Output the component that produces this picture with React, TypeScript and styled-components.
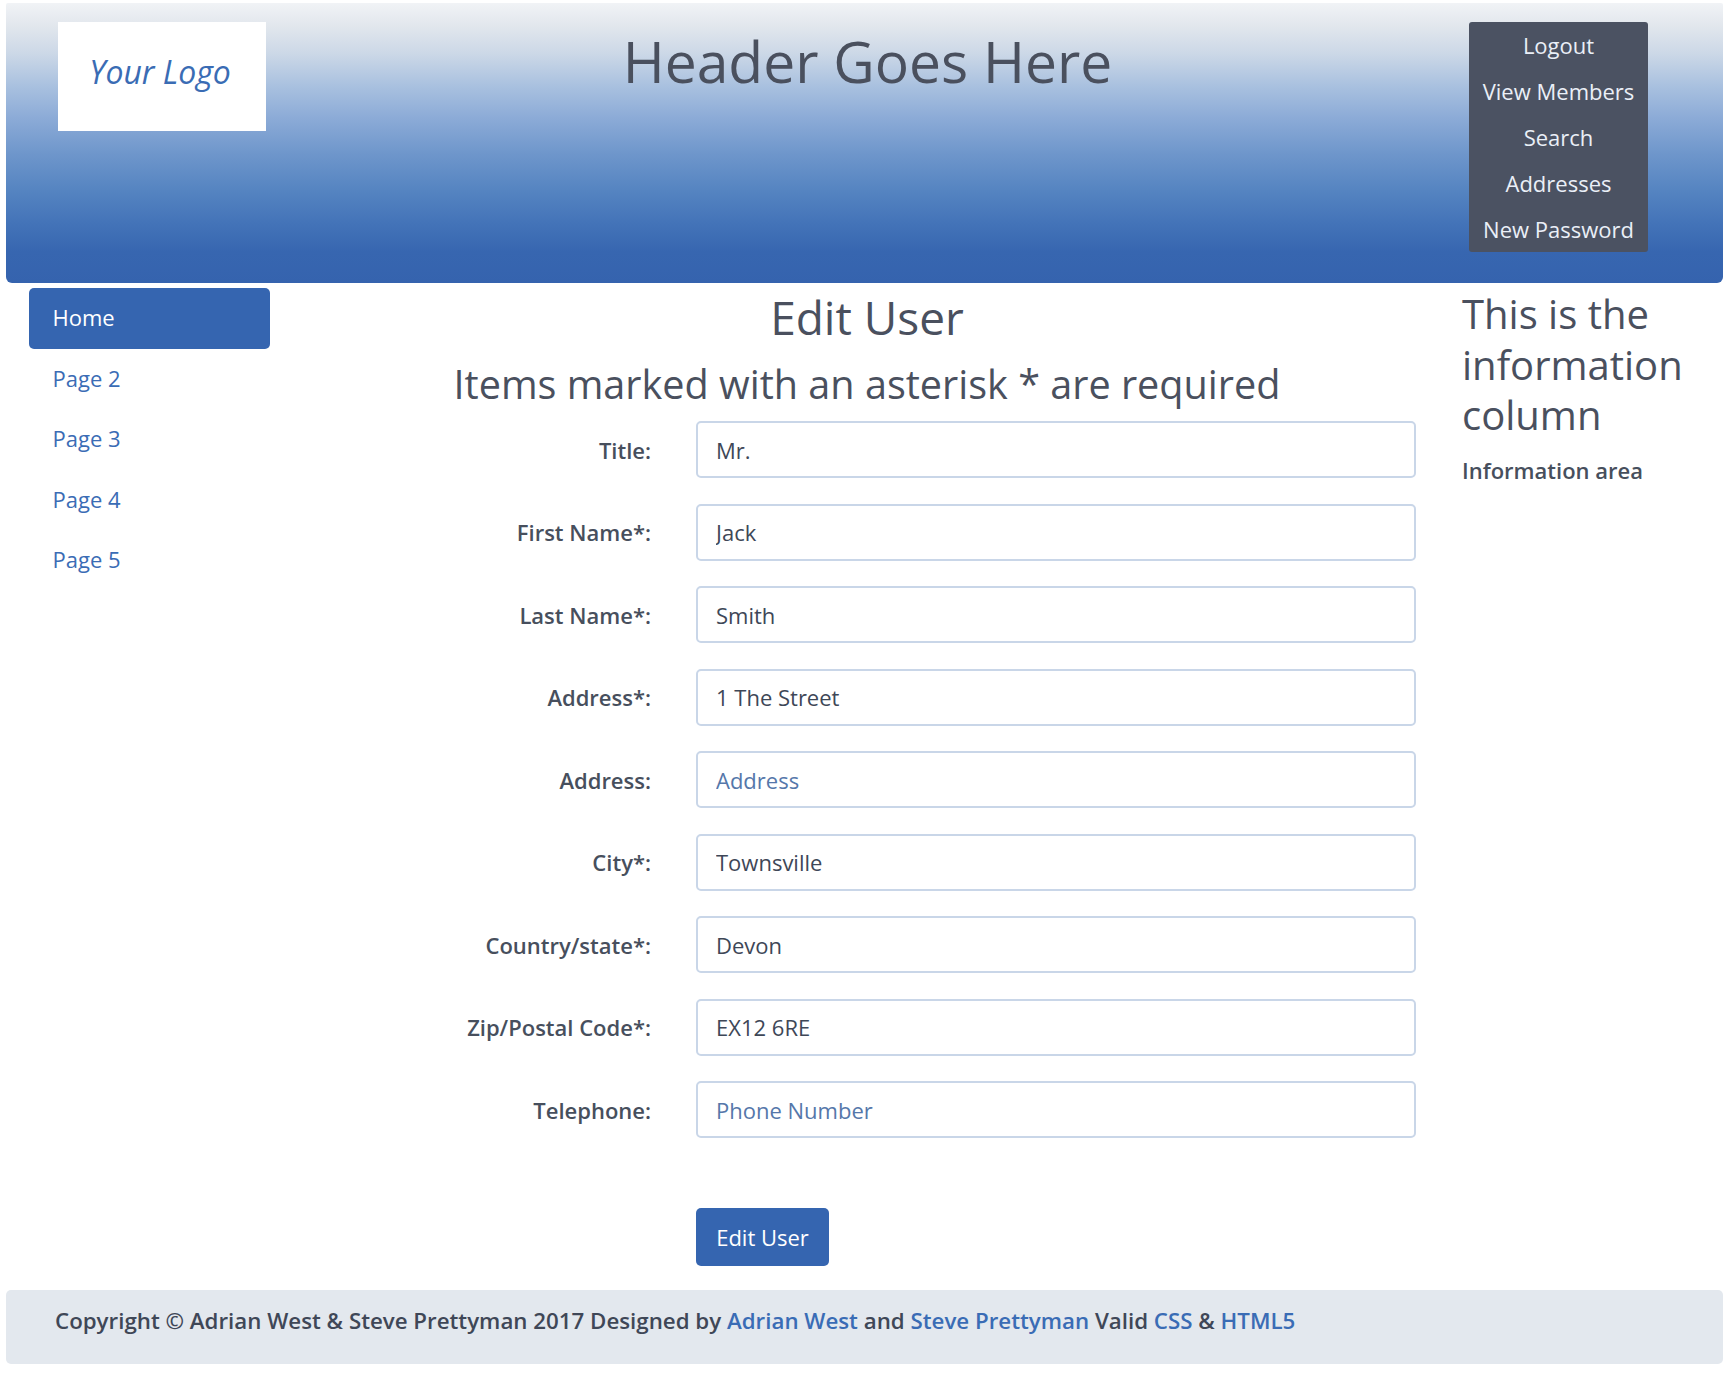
import React from "react";
import styled, { createGlobalStyle } from "styled-components";

const GlobalStyle = createGlobalStyle`
  html, body {
    margin: 0;
    padding: 0;
    background: #ffffff;
  }
  body {
    font-family: "Open Sans", "Noto Sans", "Liberation Sans", sans-serif;
    color: #454d5b;
  }
  *, *::before, *::after {
    box-sizing: border-box;
  }
`;

const Page = styled.div`
  width: 1725px;
  padding: 3px 2px 9px 6px;
  display: flex;
  flex-direction: column;
`;

const Header = styled.header`
  height: 280px;
  display: flex;
  align-items: flex-start;
  padding: 19px 75px 0 52px;
  border-radius: 2px 2px 6px 6px;
  background: linear-gradient(
    to bottom,
    #f1f3f6 0%,
    #e2e7ed 8%,
    #ccd8e7 18%,
    #a8c0df 30%,
    #8cabd7 41%,
    #6e96cb 54%,
    #5584c1 67%,
    #4373b8 79%,
    #3766b0 89%,
    #3563ae 100%
  );
`;

const LogoBox = styled.div`
  width: 208px;
  height: 109px;
  background: #ffffff;
  display: flex;
  align-items: center;
  justify-content: center;
  padding: 0 4px 10px 0;
  font-style: italic;
  font-size: 32px;
  color: #3a6cb4;
`;

const SiteTitle = styled.h1`
  flex: 1;
  margin: 0;
  padding-top: 10px;
  text-align: center;
  font-size: 57px;
  line-height: 58px;
  font-weight: 400;
  color: #4a505e;
`;

const TopNav = styled.nav`
  width: 179px;
  background: #4b5262;
  border-radius: 3px;
  display: flex;
  flex-direction: column;
`;

const TopNavLink = styled.a`
  display: block;
  height: 46px;
  line-height: 46px;
  text-align: center;
  font-size: 22px;
  font-weight: 400;
  color: #eaeff7;
  text-decoration: none;
`;

const Body = styled.div`
  display: grid;
  grid-template-columns: 286px 1150px 1fr;
  padding-top: 5px;
`;

const SideNav = styled.nav`
  display: flex;
  flex-direction: column;
  padding-left: 22.5px;
`;

const SideLink = styled.a<{ $active?: boolean }>`
  display: flex;
  align-items: center;
  width: 241px;
  height: 60.5px;
  padding: 0 0 2px 24px;
  border-radius: 5px;
  font-size: 22px;
  text-decoration: none;
  color: ${(p) => (p.$active ? "#ffffff" : "#3a6cb5")};
  background: ${(p) => (p.$active ? "#3565b0" : "transparent")};
`;

const Main = styled.main`
  display: flex;
  flex-direction: column;
  padding-top: 3px;
`;

const PageTitle = styled.h2`
  margin: 0;
  text-align: center;
  font-size: 46px;
  line-height: 52px;
  font-weight: 400;
  color: #4a505e;
`;

const Notice = styled.h3`
  margin: 16px 0 0;
  text-align: center;
  font-size: 39.6px;
  line-height: 50px;
  font-weight: 400;
  color: #4a505e;
`;

const Form = styled.form`
  margin-top: 12px;
  display: grid;
  grid-template-columns: 1fr 720px;
  column-gap: 45px;
  row-gap: 25.5px;
  padding-right: 26px;
`;

const Label = styled.label`
  align-self: center;
  text-align: right;
  font-size: 22px;
  font-weight: 600;
  color: #474f5d;
`;

const Input = styled.input`
  height: 57px;
  width: 100%;
  padding: 0 18px;
  border: 2px solid #c9d6e8;
  border-radius: 5px;
  background: #ffffff;
  font-family: inherit;
  font-size: 22px;
  color: #3e4757;
  outline: none;
  &::placeholder {
    color: #5577aa;
    opacity: 1;
  }
`;

const ButtonRow = styled.div`
  grid-column: 2;
  margin-top: 44.5px;
`;

const SubmitButton = styled.button`
  width: 133px;
  height: 58px;
  border: none;
  border-radius: 5px;
  background: #3565b0;
  color: #ffffff;
  font-family: inherit;
  font-size: 22px;
  cursor: pointer;
`;

const Aside = styled.aside`
  padding: 1px 0 0 20px;
`;

const AsideTitle = styled.h3`
  margin: 0;
  font-size: 40px;
  line-height: 50.6px;
  font-weight: 400;
  color: #4a505e;
`;

const AsideText = styled.p`
  margin: 14px 0 0;
  font-size: 22px;
  line-height: 30px;
  font-weight: 600;
  color: #474f5d;
`;

const Footer = styled.footer`
  margin-top: 24px;
  height: 74px;
  padding: 16px 0 0 49px;
  border-radius: 5px;
  background: #e3e8ee;
  font-size: 22.3px;
  line-height: 30px;
  font-weight: 600;
  color: #3f4757;
`;

const FooterLink = styled.a`
  color: #3a6cb5;
  text-decoration: none;
`;

const fields: { label: string; value?: string; placeholder?: string }[] = [
  { label: "Title:", value: "Mr." },
  { label: "First Name*:", value: "Jack" },
  { label: "Last Name*:", value: "Smith" },
  { label: "Address*:", value: "1 The Street" },
  { label: "Address:", placeholder: "Address" },
  { label: "City*:", value: "Townsville" },
  { label: "Country/state*:", value: "Devon" },
  { label: "Zip/Postal Code*:", value: "EX12 6RE" },
  { label: "Telephone:", placeholder: "Phone Number" },
];

const topLinks = ["Logout", "View Members", "Search", "Addresses", "New Password"];
const sideLinks = ["Home", "Page 2", "Page 3", "Page 4", "Page 5"];

export default function App() {
  return (
    <>
      <GlobalStyle />
      <Page>
        <Header>
          <LogoBox>Your Logo</LogoBox>
          <SiteTitle>Header Goes Here</SiteTitle>
          <TopNav>
            {topLinks.map((l) => (
              <TopNavLink key={l} href="#">
                {l}
              </TopNavLink>
            ))}
          </TopNav>
        </Header>
        <Body>
          <SideNav>
            {sideLinks.map((l, i) => (
              <SideLink key={l} href="#" $active={i === 0}>
                {l}
              </SideLink>
            ))}
          </SideNav>
          <Main>
            <PageTitle>Edit User</PageTitle>
            <Notice>Items marked with an asterisk * are required</Notice>
            <Form onSubmit={(e) => e.preventDefault()}>
              {fields.map((f, i) => (
                <React.Fragment key={i}>
                  <Label htmlFor={`f${i}`}>{f.label}</Label>
                  <Input
                    id={`f${i}`}
                    defaultValue={f.value}
                    placeholder={f.placeholder}
                  />
                </React.Fragment>
              ))}
              <ButtonRow>
                <SubmitButton type="submit">Edit User</SubmitButton>
              </ButtonRow>
            </Form>
          </Main>
          <Aside>
            <AsideTitle>This is the information column</AsideTitle>
            <AsideText>Information area</AsideText>
          </Aside>
        </Body>
        <Footer>
          Copyright © Adrian West &amp; Steve Prettyman 2017 Designed by{" "}
          <FooterLink href="#">Adrian West</FooterLink> and{" "}
          <FooterLink href="#">Steve Prettyman</FooterLink> Valid{" "}
          <FooterLink href="#">CSS</FooterLink> &amp;{" "}
          <FooterLink href="#">HTML5</FooterLink>
        </Footer>
      </Page>
    </>
  );
}
